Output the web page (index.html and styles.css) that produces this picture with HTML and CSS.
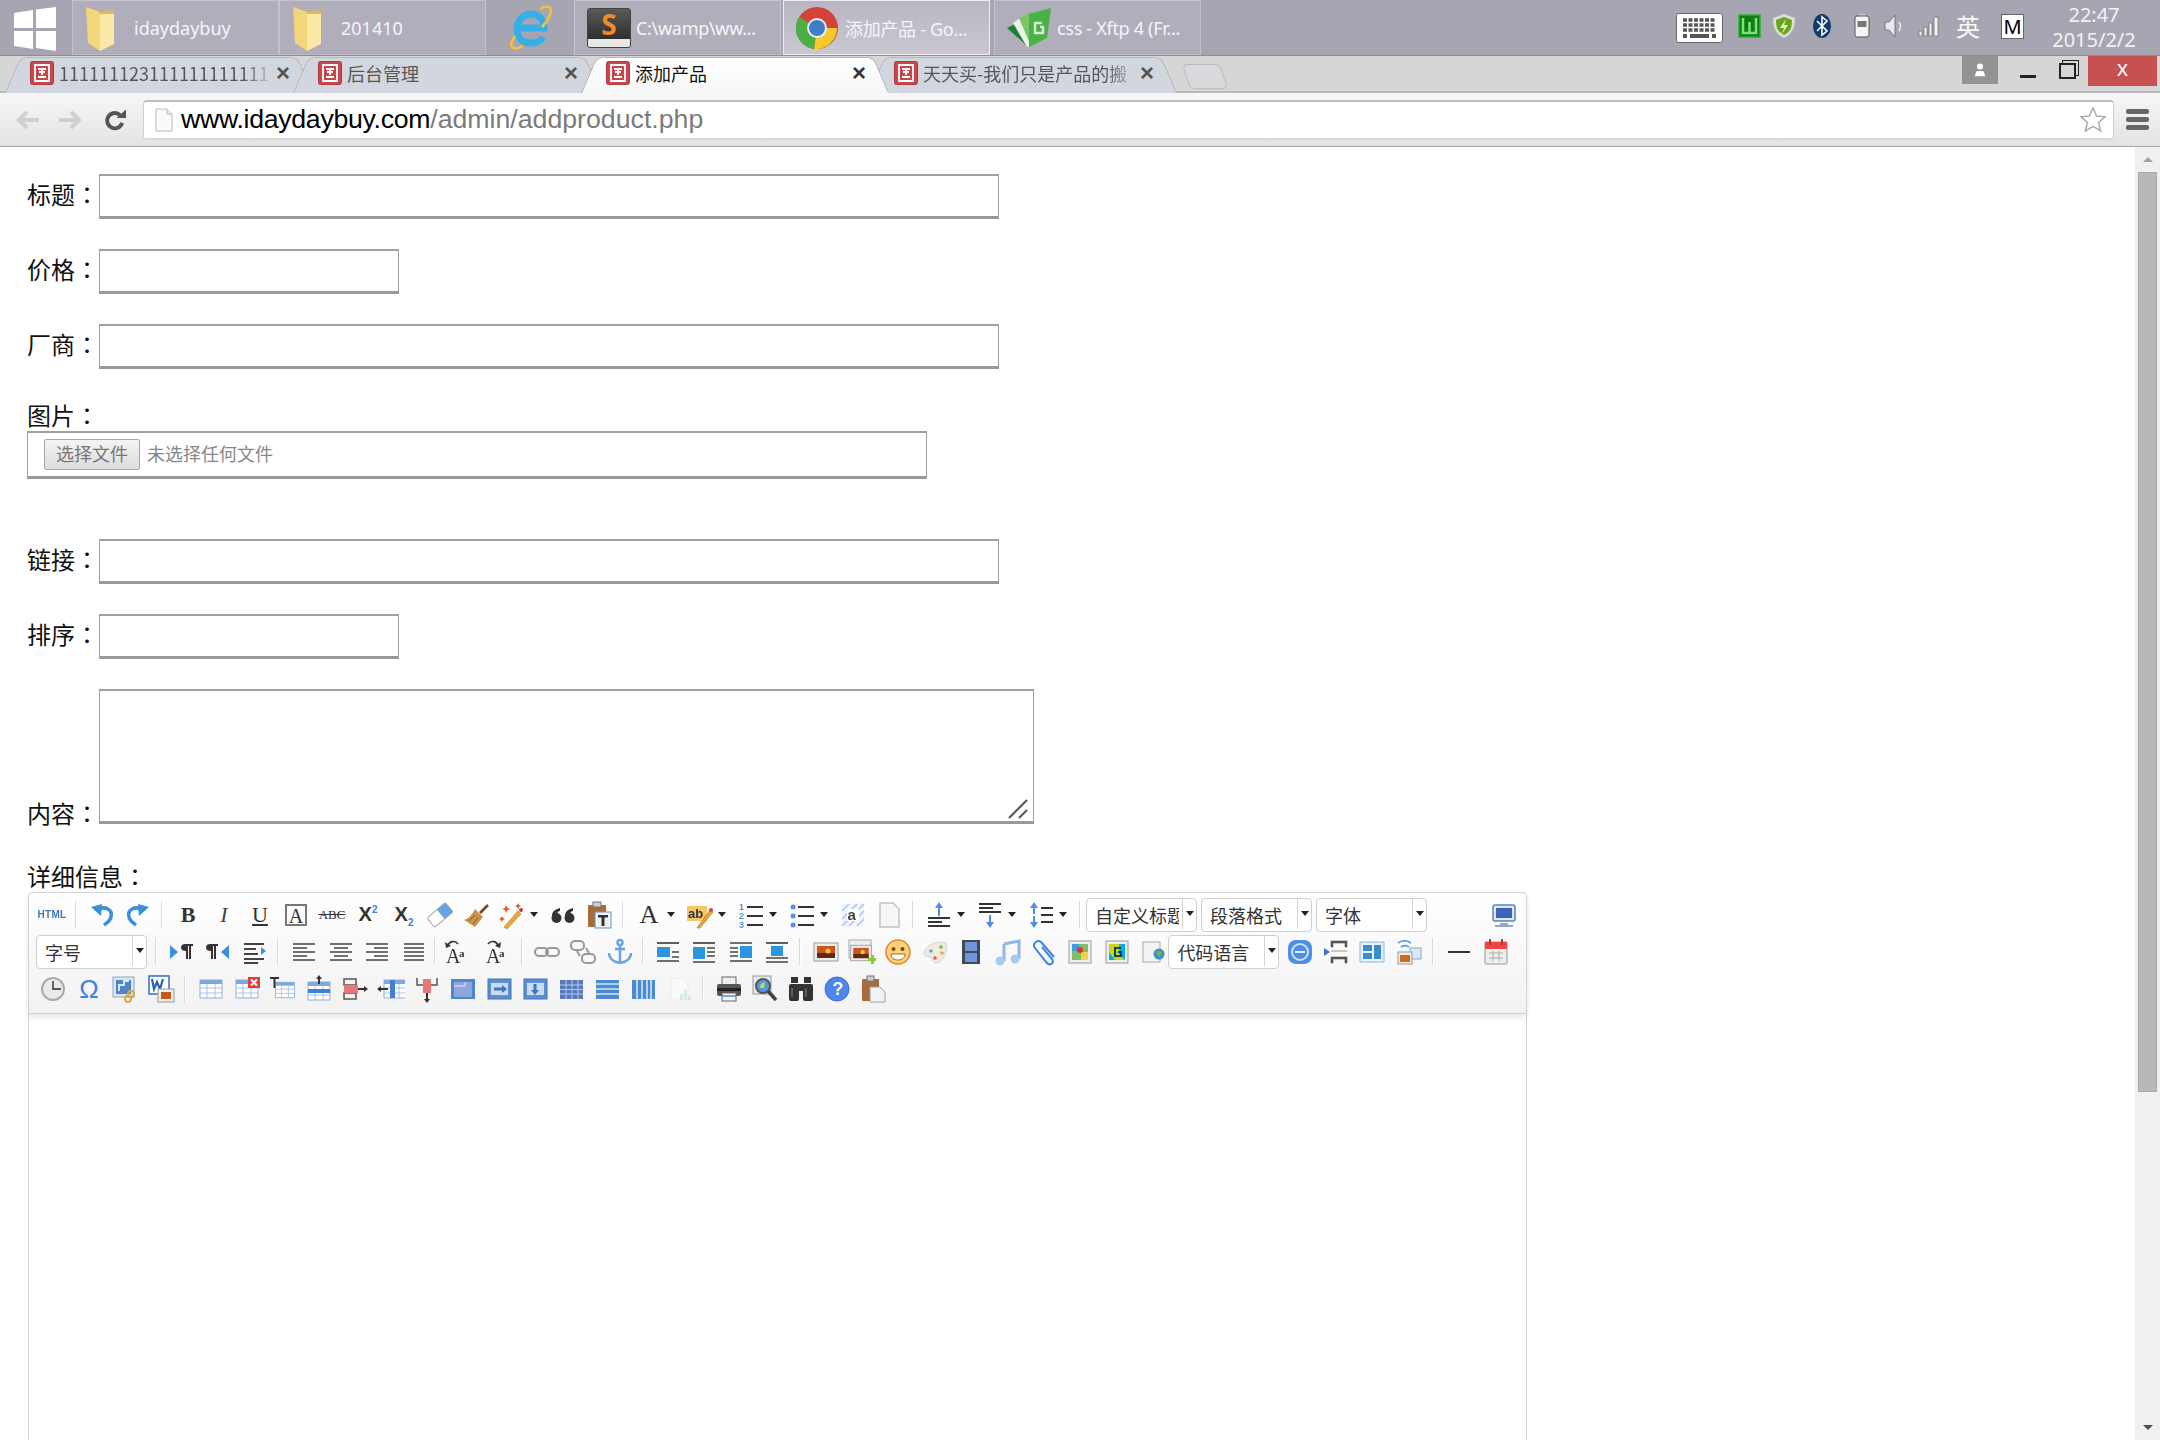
FILE: index.html
```html
<!DOCTYPE html>
<html lang="zh-CN">
<head>
<meta charset="UTF-8" />
<title>添加产品</title>
<link rel="stylesheet" href="styles.css">
</head>
<body>
<svg class="defs" xmlns="http://www.w3.org/2000/svg">
    <symbol id="fav" viewBox="0 0 24 24">
        <rect x="0.5" y="0.5" width="23" height="23" rx="2" fill="#c8474c" stroke="#b03a3e"/>
        <path d="M5 4h14v16H5z M8 8h8 M12 8v6 M9 11h6 M8 16h8" fill="none" stroke="#fff" stroke-width="1.8"/>
    </symbol>
    <symbol id="tbl" viewBox="0 0 28 28">
        <rect x="3" y="5" width="22" height="18" fill="#fff" stroke="#8fb0d8"/>
        <rect x="3" y="5" width="22" height="4" fill="#7fa8dc"/>
        <path d="M3 13h22M3 18h22M10 9v14M18 9v14" stroke="#a9c2e2"/>
    </symbol>
    <symbol id="tbld" viewBox="0 0 28 28">
        <rect x="3" y="4" width="23" height="20" fill="#5d8fd0" stroke="#3f74b8"/>
        <rect x="6" y="8" width="17" height="12" fill="#c9dcf3"/>
    </symbol>
    <symbol id="lines" viewBox="0 0 28 28">
        <path d="M4 6h20M4 10h20M4 14h20M4 18h20M4 22h20" stroke="#444" stroke-width="1.6"/>
    </symbol>
    <symbol id="sunset" viewBox="0 0 28 28">
        <rect x="2" y="5" width="24" height="18" fill="#eee" stroke="#999"/>
        <rect x="5" y="8" width="18" height="12" fill="#c9581c"/>
        <rect x="5" y="15" width="18" height="5" fill="#5c2a10"/>
        <circle cx="16" cy="13" r="2.5" fill="#f6c23e"/>
    </symbol>
    <symbol id="chain" viewBox="0 0 28 28">
        <rect x="2" y="10" width="13" height="8" rx="4" fill="none" stroke="#999" stroke-width="2"/>
        <rect x="13" y="10" width="13" height="8" rx="4" fill="none" stroke="#999" stroke-width="2"/>
    </symbol>
</svg>

<div class="screen">
    <div class="taskbar">
        <svg class="start" viewBox="0 0 42 44"><path d="M0 6l19-3v18H0z M22 2.500L42 0v21H22z M0 24h19v18L0 39z M22 24h20v20l-20-3z" fill="#fff"/></svg>
        <div class="task">
            <svg class="task-ico folder" viewBox="0 0 31 46"><path d="M1 2l14 5v39L3 38z" fill="#f3d67a"/><path d="M15 7h14v32l-14 7z" fill="#f9e8a6"/><path d="M15 7l14-2v4H15z" fill="#e2b94e"/></svg>
            <span>idaydaybuy</span>
        </div>
        <div class="task">
            <svg class="task-ico folder" viewBox="0 0 31 46"><path d="M1 2l14 5v39L3 38z" fill="#f3d67a"/><path d="M15 7h14v32l-14 7z" fill="#f9e8a6"/><path d="M15 7l14-2v4H15z" fill="#e2b94e"/></svg>
            <span>201410</span>
        </div>
        <svg class="ie" viewBox="0 0 46 46">
            <path d="M13 24h24c0-9-6-14-13-14S10 16 10 25s6 14 14 14c6 0 10-2 12-6" fill="none" stroke="#36afe8" stroke-width="7"/>
            <path d="M8 32C0 44 6 47 16 42M33 5c8-5 13-2 10 6-2 5-5 9-8 12" fill="none" stroke="#f2c430" stroke-width="2.500"/>
        </svg>
        <div class="task">
            <div class="sublime"><span>S</span></div>
            <span class="task-label tight">C:\wamp\ww...</span>
        </div>
        <div class="task active">
            <svg class="task-ico chrome" viewBox="0 0 42 42">
                <circle cx="21" cy="21" r="21" fill="#d2433a"/>
                <path d="M21 21L3 10A21 21 0 0 0 18 42z" fill="#4caf43"/>
                <path d="M21 21h20A21 21 0 0 1 18 42z" fill="#f5c92d"/>
                <circle cx="21" cy="21" r="10" fill="#eee"/>
                <circle cx="21" cy="21" r="8" fill="#3f7fc8"/>
            </svg>
            <span class="task-label tight">添加产品 - Go...</span>
        </div>
        <div class="task last">
            <svg class="task-ico xftp" viewBox="0 0 45 40">
                <path d="M0 20l12-6 8 24z" fill="#1f7f35"/>
                <path d="M6 15l10-7 8 30-4 1z" fill="#e9f2e6"/>
                <path d="M12 10L26 3l-2 35z" fill="#7cc36a"/>
                <path d="M22 6L44 0l-4 30-18 9z" fill="#46b247"/>
                <path d="M35 15h-7v10h8v-6h-3" fill="none" stroke="#d6ecd0" stroke-width="2.500"/>
            </svg>
            <span class="task-label tight">css - Xftp 4 (Fr...</span>
        </div>
        <div class="tray">
            <svg class="tray-kbd" viewBox="0 0 47 30">
                <rect x="0.500" y="0.500" width="46" height="29" rx="2" fill="#fff" stroke="#666"/>
                <path d="M7 7h33M7 12h33M7 17h33" stroke="#555" stroke-width="3.500" stroke-dasharray="4 1.500"/>
                <path d="M7 23h4M14 23h19M36 23h4" stroke="#555" stroke-width="4"/>
            </svg>
            <svg class="tray-ico wg" viewBox="0 0 23 24">
                <rect x="1" y="1" width="21" height="22" fill="#0f7d15" stroke="#21b52a" stroke-width="1.500"/>
                <path d="M5 4v15h13V4M11.500 8v11" fill="none" stroke="#7fe07f" stroke-width="2.500"/>
            </svg>
            <svg class="tray-ico shield" viewBox="0 0 24 24"><path d="M12 0l11 4c0 10-3 16-11 20C4 20 1 14 1 4z" fill="#d9dfd2"/><path d="M12 3l8 3c0 8-2 12-8 15C6 18 4 14 4 6z" fill="#6aa51e"/><path d="M14 5l-6 9h4l-2 6 6-9h-4z" fill="#eef6c8"/></svg>
            <svg class="tray-ico bt" viewBox="0 0 18 24"><ellipse cx="9" cy="12" rx="9" ry="12" fill="#0f3a6e"/><path d="M4 7l10 10-5 4V3l5 4L4 17" fill="none" stroke="#fff" stroke-width="1.600"/></svg>
            <svg class="tray-ico batt" viewBox="0 0 16 24"><rect x="5" y="0" width="6" height="3" fill="#ccc"/><rect x="1" y="2" width="14" height="21" rx="2" fill="#f4f4f4" stroke="#555"/><rect x="3.500" y="7" width="9" height="6" fill="#777"/></svg>
            <svg class="tray-ico vol" viewBox="0 0 20 24"><path d="M1 8h4l6-7v22l-6-7H1z" fill="#e8e8ee" stroke="#777"/><path d="M15 8c2 3 2 6 0 9" fill="none" stroke="#eee" stroke-width="1.500"/></svg>
            <svg class="tray-ico sig" viewBox="0 0 22 24"><path d="M1 17h3v5H1zM6 13h3v9H6zM11 9h3v13h-3zM16 3h4v19h-4z" fill="#f1f1f1" stroke="#666" stroke-width="0.700"/></svg>
            <span class="ime">英</span>
            <span class="tray-m">M</span>
            <div class="clock"><span>22:47</span><span>2015/2/2</span></div>
        </div>
    </div>

    <div class="tabstrip">
        <div class="tab">
            <svg class="fav"><use href="#fav"/></svg>
            <span class="tab-title fade">111111123111111111111</span>
            <span class="tab-close">×</span>
        </div>
        <div class="tab">
            <svg class="fav"><use href="#fav"/></svg>
            <span class="tab-title">后台管理</span>
            <span class="tab-close">×</span>
        </div>
        <div class="tab current">
            <svg class="fav"><use href="#fav"/></svg>
            <span class="tab-title">添加产品</span>
            <span class="tab-close">×</span>
        </div>
        <div class="tab">
            <svg class="fav"><use href="#fav"/></svg>
            <span class="tab-title fade">天天买-我们只是产品的搬</span>
            <span class="tab-close">×</span>
        </div>
        <div class="newtab"></div>
        <div class="winctl">
            <div class="avatar"><svg viewBox="0 0 16 16"><circle cx="8" cy="4" r="3.500" fill="#fff"/><path d="M2 15l2-6h8l2 6z" fill="#fff"/></svg></div>
            <div class="win-min"></div>
            <div class="win-max"></div>
            <div class="win-close">x</div>
        </div>
    </div>

    <div class="chrome-bar">
        <svg class="nav back" viewBox="0 0 24 20"><path d="M11 2l-8 8 8 8M3 10h20" fill="none" stroke="#d0d0d0" stroke-width="4"/></svg>
        <svg class="nav fwd" viewBox="0 0 24 20"><path d="M13 2l8 8-8 8M21 10H1" fill="none" stroke="#d0d0d0" stroke-width="4"/></svg>
        <svg class="nav reload" viewBox="0 0 22 24"><path d="M18 15a8 8 0 1 1-2-8" fill="none" stroke="#555" stroke-width="4"/><path d="M12 10h10V1z" fill="#555"/></svg>
        <div class="omnibox">
            <svg class="page-ico" viewBox="0 0 18 24"><path d="M1 1h11l5 5v17H1z" fill="#fafafa" stroke="#bbb"/><path d="M12 1v5h5" fill="#eee" stroke="#bbb"/></svg>
            <span class="url"><span class="url-host">www.idaydaybuy.com</span><span class="url-path">/admin/addproduct.php</span></span>
            <svg class="star" viewBox="0 0 28 28"><path d="M14 2l3.600 8 8.400.800-6.400 5.600 2 8.600L14 20.400 6.400 25l2-8.600L2 10.800l8.400-.800z" fill="#fff" stroke="#aaa" stroke-width="1.500"/></svg>
        </div>
        <div class="menu"><i></i><i></i><i></i></div>
    </div>

    <div class="viewport">
        <main class="page">
            <form class="product-form">
                <div class="row"><label class="lbl">标题<span class="colon" lang="zh-TW">：</span></label><input class="txt long" type="text" /></div>
                <div class="row"><label class="lbl">价格<span class="colon" lang="zh-TW">：</span></label><input class="txt short" type="text" /></div>
                <div class="row"><label class="lbl">厂商<span class="colon" lang="zh-TW">：</span></label><input class="txt long" type="text" /></div>

                <label class="lbl block">图片<span class="colon" lang="zh-TW">：</span></label>
                <div class="filebox">
                    <span class="file-btn">选择文件</span>
                    <span class="file-name">未选择任何文件</span>
                </div>

                <div class="row"><label class="lbl">链接<span class="colon" lang="zh-TW">：</span></label><input class="txt long" type="text" /></div>
                <div class="row"><label class="lbl">排序<span class="colon" lang="zh-TW">：</span></label><input class="txt short" type="text" /></div>
                <div class="row bottom">
                    <label class="lbl">内容<span class="colon" lang="zh-TW">：</span></label>
                    <div class="area-wrap">
                        <textarea class="area"></textarea>
                        <svg class="grip" viewBox="0 0 22 22"><path d="M20 2L2 20M20 12l-8 8" stroke="#555" stroke-width="2"/></svg>
                    </div>
                </div>

                <label class="lbl block detail">详细信息<span class="colon" lang="zh-TW">：</span></label>
                <div class="editor">
                    <div class="toolbar">
                        <!-- row 1 -->
                        <div class="tb-row">
                            <span class="ic"><span class="html-ico">HTML</span></span>
                            <i class="sep"></i>
                            <span class="ic"><svg viewBox="0 0 28 28"><path d="M10 9c7-5 15 0 13 7-1 4-4 6-7 8" fill="none" stroke="#3a8ee0" stroke-width="3.500"/><path d="M3 6l11-3-1 12z" fill="#3a8ee0"/></svg></span>
                            <span class="ic"><svg viewBox="0 0 28 28"><path d="M18 9c-7-5-15 0-13 7 1 4 4 6 7 8" fill="none" stroke="#3a8ee0" stroke-width="3.500"/><path d="M25 6l-11-3 1 12z" fill="#3a8ee0"/></svg></span>
                            <i class="sep"></i>
                            <span class="ic"><b class="gl">B</b></span>
                            <span class="ic"><em class="gl it">I</em></span>
                            <span class="ic"><span class="gl ul">U</span></span>
                            <span class="ic"><span class="gl boxed">A</span></span>
                            <span class="ic"><span class="gl strike">ABC</span></span>
                            <span class="ic"><span class="gl sc">X<sup>2</sup></span></span>
                            <span class="ic"><span class="gl sc">X<sub>2</sub></span></span>
                            <span class="ic"><svg viewBox="0 0 28 28"><g transform="rotate(-40 14 14)"><rect x="2" y="8" width="24" height="12" rx="2" fill="#fff" stroke="#a5a5a5"/><rect x="15" y="8" width="11" height="12" rx="1" fill="#6aa2e6"/></g></svg></span>
                            <span class="ic"><svg viewBox="0 0 28 28"><path d="M17 11l8-8 2 2-8 8z" fill="#7a4f1c"/><path d="M13 8l8 8-8 10L2 19c4-1 8-5 11-11z" fill="#c9934a"/><path d="M7 20l6-6M11 23l5-6" stroke="#8a5f24"/></svg></span>
                            <span class="ic dd"><svg viewBox="0 0 28 28"><path d="M6 26L20 10l3 3L9 28z" fill="#e9a93b" stroke="#b97a1e" stroke-width=".6"/><path d="M8 4l1.500 3 3 1-3 1L8 12 7 9 4 8l3-1zM20 2l1 2 2 1-2 1-1 2-1-2-2-1 2-1zM4 15l1 2 2 1-2 1-1 2-1-2-2-1 2-1z" fill="#e8552a"/><circle cx="23" cy="9" r="2" fill="#d33"/></svg><i class="caret"></i></span>
                            <span class="ic"><svg viewBox="0 0 28 28"><g fill="#333"><circle cx="7.500" cy="17" r="5"/><path d="M3 15C3 10 7 8 11 7v3c-2 0-3 2-3 4z"/><circle cx="20.500" cy="17" r="5"/><path d="M16 15c0-5 4-7 8-8v3c-2 0-3 2-3 4z"/></g></svg></span>
                            <span class="ic"><svg viewBox="0 0 28 28"><rect x="3" y="4" width="18" height="22" rx="1" fill="#a86b3a"/><rect x="8" y="1" width="8" height="5" fill="#ccc" stroke="#777"/><rect x="10" y="11" width="16" height="16" fill="#eef3f8" stroke="#6f90b5"/><path d="M13 14h10v2.500h-3.500V25h-3v-8.500H13z" fill="#333"/></svg></span>
                            <i class="sep"></i>
                            <span class="ic dd"><span class="gl big">A</span><i class="caret"></i></span>
                            <span class="ic dd"><svg viewBox="0 0 28 28"><rect x="1" y="5" width="20" height="15" fill="#f5c769"/><text x="2" y="17" class="svg-ab">ab</text><path d="M11 27L24 9l3 2-13 16z" fill="#e7a63b" stroke="#a3701e" stroke-width=".6"/><circle cx="25" cy="9" r="2" fill="#d43"/></svg><i class="caret"></i></span>
                            <span class="ic dd"><svg viewBox="0 0 28 28"><text x="2" y="9" class="svg-num">1</text><text x="2" y="18" class="svg-num">2</text><text x="2" y="27" class="svg-num">3</text><path d="M10 6h16M10 15h16M10 24h16" stroke="#333" stroke-width="2"/></svg><i class="caret"></i></span>
                            <span class="ic dd"><svg viewBox="0 0 28 28"><g fill="#5b8fe8"><circle cx="5" cy="6" r="2.500"/><circle cx="5" cy="15" r="2.500"/><circle cx="5" cy="24" r="2.500"/></g><path d="M10 6h16M10 15h16M10 24h16" stroke="#333" stroke-width="2"/></svg><i class="caret"></i></span>
                            <span class="ic"><svg viewBox="0 0 28 28"><rect x="3" y="3" width="22" height="22" fill="#f0f5fd"/><path d="M3 10l7-7M3 18L18 3M3 25L25 3M10 25L25 10M18 25l7-7" stroke="#a9c6f0" stroke-width="1.500"/><rect x="8" y="8" width="12" height="12" fill="#fff"/><text x="8.500" y="19" class="svg-a">a</text></svg></span>
                            <span class="ic"><svg viewBox="0 0 28 28"><path d="M5 2h13l6 6v18H5z" fill="#f6f6f6" stroke="#c4c4c4" stroke-width="1.500"/></svg></span>
                            <i class="sep"></i>
                            <span class="ic dd"><svg viewBox="0 0 28 28"><path d="M14 1l-4 6h3v8h2V7h3z" fill="#4f8fe0"/><path d="M3 17h22M3 21h14M3 25h22" stroke="#333" stroke-width="2"/></svg><i class="caret"></i></span>
                            <span class="ic dd"><svg viewBox="0 0 28 28"><path d="M3 3h22M3 7h14M3 11h22" stroke="#333" stroke-width="2"/><path d="M14 27l-4-6h3v-7h2v7h3z" fill="#4f8fe0"/></svg><i class="caret"></i></span>
                            <span class="ic dd"><svg viewBox="0 0 28 28"><path d="M7 1L3 7h3v6h2V7h3zM7 27l-4-6h3v-6h2v6h3z" fill="#4f8fe0"/><path d="M14 7h12M14 14h12M14 21h12" stroke="#333" stroke-width="2"/></svg><i class="caret"></i></span>
                            <i class="sep last-sep"></i>
                            <div class="sel"><span class="sel-text">自定义标题</span><span class="sel-btn"><i class="caret"></i></span></div>
                            <div class="sel"><span class="sel-text">段落格式</span><span class="sel-btn"><i class="caret"></i></span></div>
                            <div class="sel"><span class="sel-text">字体</span><span class="sel-btn"><i class="caret"></i></span></div>
                            <span class="ic monitor"><svg viewBox="0 0 28 28"><rect x="3" y="4" width="22" height="16" rx="2" fill="#dce8f6" stroke="#5e83b0" stroke-width="1.500"/><rect x="6" y="7" width="16" height="10" fill="#3b62b8"/><path d="M10 23h8M5 25h18" stroke="#6f8fb8" stroke-width="1.500"/></svg></span>
                        </div>
                        <!-- row 2 -->
                        <div class="tb-row second">
                            <div class="sel first-sel"><span class="sel-text">字号</span><span class="sel-btn"><i class="caret"></i></span></div>
                            <i class="sep after-sel"></i>
                            <span class="ic"><svg viewBox="0 0 28 28"><path d="M3 7l8 7-8 7z" fill="#3d8fe0"/><path d="M18 6h8v2h-2v13h-2V8h-1v13h-2v-8c-3 0-5-1-5-3.500S16 6 18 6z" fill="#333"/></svg></span>
                            <span class="ic"><svg viewBox="0 0 28 28"><path d="M25 7l-8 7 8 7z" fill="#3d8fe0"/><path d="M6 6h8v2h-2v13h-2V8H9v13H7v-8c-3 0-5-1-5-3.500S4 6 6 6z" fill="#333"/></svg></span>
                            <span class="ic"><svg viewBox="0 0 28 28"><path d="M4 6h20M4 11h12M4 16h14M4 21h20M4 25h14" stroke="#444" stroke-width="1.800"/><path d="M26 13l-5-4v8z" fill="#3d8fe0"/></svg></span>
                            <i class="sep"></i>
                            <span class="ic"><svg viewBox="0 0 28 28"><path d="M3 6h22M3 10h14M3 14h22M3 18h14M3 22h22" stroke="#444" stroke-width="1.700"/></svg></span>
                            <span class="ic"><svg viewBox="0 0 28 28"><path d="M3 6h22M7 10h14M3 14h22M7 18h14M3 22h22" stroke="#444" stroke-width="1.700"/></svg></span>
                            <span class="ic"><svg viewBox="0 0 28 28"><path d="M3 6h22M11 10h14M3 14h22M11 18h14M3 22h22" stroke="#444" stroke-width="1.700"/></svg></span>
                            <span class="ic"><svg viewBox="0 0 28 28"><use href="#lines"/></svg></span>
                            <i class="sep tight"></i>
                            <span class="ic w40"><svg viewBox="0 0 28 28"><path d="M5 8c1-5 7-6 10-2" fill="none" stroke="#333" stroke-width="1.700"/><path d="M2 4l1 6 5-2z" fill="#333"/><text x="3" y="25" class="svg-big">A</text><text x="16" y="19" class="svg-small">a</text></svg></span>
                            <span class="ic w40"><svg viewBox="0 0 28 28"><path d="M5 6c3-4 9-3 10 2" fill="none" stroke="#333" stroke-width="1.700"/><path d="M18 4l-1 6-5-2z" fill="#333"/><text x="3" y="25" class="svg-big">A</text><text x="16" y="19" class="svg-small">a</text></svg></span>
                            <i class="sep mid"></i>
                            <span class="ic"><svg viewBox="0 0 28 28"><use href="#chain"/></svg></span>
                            <span class="ic"><svg viewBox="0 0 28 28"><g fill="none" stroke="#999" stroke-width="2"><rect x="2" y="3" width="13" height="9" rx="4"/><rect x="13" y="16" width="13" height="9" rx="4"/><path d="M8 13l3 5M20 15l-3-5"/></g></svg></span>
                            <span class="ic"><svg viewBox="0 0 28 28"><g fill="none" stroke="#6aa3e0" stroke-width="2.500"><circle cx="14" cy="4.500" r="2.500"/><path d="M14 7v18M9 11h10M3 15c0 6 5 9 11 10 6-1 11-4 11-10"/></g></svg></span>
                            <i class="sep mid"></i>
                            <span class="ic"><svg viewBox="0 0 28 28"><path d="M3 5h22" stroke="#444" stroke-width="1.700"/><rect x="3" y="9" width="13" height="10" fill="#2b95e0"/><path d="M18 14h7M18 19h7M3 23h22" stroke="#444" stroke-width="1.700"/></svg></span>
                            <span class="ic"><svg viewBox="0 0 28 28"><path d="M3 5h22" stroke="#444" stroke-width="1.700"/><rect x="3" y="9" width="12" height="12" fill="#2b95e0"/><path d="M17 10h8M17 14h8M17 18h8M3 24h22" stroke="#444" stroke-width="1.700"/></svg></span>
                            <span class="ic"><svg viewBox="0 0 28 28"><path d="M3 5h22M3 10h8M3 14h8M3 18h8M3 23h22" stroke="#444" stroke-width="1.700"/><rect x="13" y="8" width="12" height="12" fill="#2b95e0"/></svg></span>
                            <span class="ic"><svg viewBox="0 0 28 28"><path d="M3 5h22" stroke="#444" stroke-width="1.700"/><rect x="8" y="8" width="12" height="10" fill="#2b95e0"/><path d="M3 20h22M3 24h22" stroke="#444" stroke-width="1.700"/></svg></span>
                            <i class="sep mid"></i>
                            <span class="ic"><svg viewBox="0 0 28 28"><use href="#sunset"/></svg></span>
                            <span class="ic"><svg viewBox="0 0 28 28"><rect x="1" y="2" width="22" height="18" fill="#eee" stroke="#aaa"/><use href="#sunset" x="1" y="3" width="24" height="24"/><path d="M23 17h3v3h2v3h-2v3h-3v-3h-3v-3h3z" fill="#8ec63f"/></svg></span>
                            <span class="ic"><svg viewBox="0 0 28 28"><circle cx="14" cy="14" r="12" fill="#fbd37a" stroke="#e5862a" stroke-width="1.500"/><circle cx="9.500" cy="11" r="2" fill="#7a4a12"/><circle cx="18.500" cy="11" r="2" fill="#7a4a12"/><path d="M7 16h14c0 4-3 6-7 6s-7-2-7-6z" fill="#fff" stroke="#a5621c"/></svg></span>
                            <span class="ic"><svg viewBox="0 0 28 28"><path d="M3 15C5 6 18 2 25 5c2 6-2 20-10 20-4 0-3-5-6-6-2-1-6 0-6-4z" fill="#eeeadf" stroke="#d8d3c4"/><g><circle cx="20" cy="9" r="1.800" fill="#7ab648"/><circle cx="21" cy="15" r="1.800" fill="#e8a53b"/><circle cx="14" cy="20" r="1.800" fill="#d9634a"/><circle cx="10" cy="13" r="1.800" fill="#6a9be0"/></g></svg></span>
                            <span class="ic"><svg viewBox="0 0 28 28"><rect x="5" y="2" width="18" height="24" fill="#3f4a57"/><rect x="8" y="4" width="12" height="9" fill="#6f96dc"/><rect x="8" y="15" width="12" height="9" fill="#6f96dc"/></svg></span>
                            <span class="ic"><svg viewBox="0 0 28 28"><path d="M10 6l15-3v18" fill="none" stroke="#8db8ea" stroke-width="3"/><path d="M10 6v17" stroke="#8db8ea" stroke-width="3"/><circle cx="6" cy="23" r="4.500" fill="#a9cbf0"/><circle cx="21" cy="21" r="4.500" fill="#a9cbf0"/></svg></span>
                            <span class="ic"><svg viewBox="0 0 28 28"><path d="M12 9l10 12c3 4-2 7-5 4L5 10C2 6 7 1 11 4l13 15" fill="none" stroke="#3f80e0" stroke-width="2"/></svg></span>
                            <span class="ic"><svg viewBox="0 0 28 28"><rect x="3" y="3" width="22" height="22" fill="#eee" stroke="#9a9a9a"/><rect x="6" y="6" width="16" height="16" fill="#7cc06a"/><rect x="6" y="6" width="7" height="7" fill="#3f9ade"/><rect x="15" y="14" width="7" height="8" fill="#f0d34a"/><circle cx="14" cy="12" r="3" fill="#d33"/></svg></span>
                            <span class="ic"><svg viewBox="0 0 28 28"><rect x="3" y="3" width="22" height="22" fill="#eee" stroke="#9a9a9a"/><rect x="6" y="6" width="16" height="16" fill="#12a8e0"/><path d="M6 6h10v10l6 6H12L6 14z" fill="#c9d41f"/><path d="M18 10h-6v8h6v-4h-3" fill="none" stroke="#145" stroke-width="2"/></svg></span>
                            <span class="ic"><svg viewBox="0 0 28 28"><rect x="4" y="4" width="17" height="20" fill="#f3f3f3" stroke="#aaa"/><circle cx="20" cy="16" r="5.500" fill="#3f8fd0"/><path d="M17 14c2-2 5-1 6 1l-3 4z" fill="#7ab648"/></svg></span>
                            <div class="sel code-sel"><span class="sel-text">代码语言</span><span class="sel-btn"><i class="caret"></i></span></div>
                            <span class="ic after-code"><svg viewBox="0 0 28 28"><rect x="2" y="2" width="24" height="24" rx="8" fill="#4a8ee8"/><circle cx="14" cy="14" r="8" fill="none" stroke="#cfe2fa" stroke-width="2"/><path d="M9 14h10" stroke="#e4effc" stroke-width="2"/></svg></span>
                            <span class="ic"><svg viewBox="0 0 28 28"><path d="M9 3h16v6h-2V5H11v4H9zM9 19h16v6h-2v-4H11v4H9zM9 13h16" fill="#555" stroke="#555" stroke-width=".6"/><path d="M8 14l-6-4v8z" fill="#3a74d0"/></svg></span>
                            <span class="ic"><svg viewBox="0 0 28 28"><rect x="2" y="4" width="24" height="20" fill="#e8f1fb" stroke="#8fb3dc"/><rect x="5" y="7" width="9" height="6" fill="#3b8ccf"/><rect x="5" y="15" width="9" height="6" fill="#3b8ccf"/><rect x="16" y="7" width="7" height="14" fill="#3b8ccf"/></svg></span>
                            <span class="ic"><svg viewBox="0 0 28 28"><path d="M3 5c4-3 9-3 13 0M6 9c3-2 5-2 8 0" fill="none" stroke="#5f9be0" stroke-width="1.600"/><rect x="15" y="10" width="11" height="11" fill="#dbe8f7" stroke="#88a8cc"/><rect x="3" y="14" width="14" height="12" fill="#eee" stroke="#999"/><rect x="5" y="17" width="10" height="7" fill="#cf6a1e"/></svg></span>
                            <i class="sep"></i>
                            <span class="ic"><svg viewBox="0 0 28 28"><path d="M3 14h22" stroke="#333" stroke-width="2"/></svg></span>
                            <span class="ic"><svg viewBox="0 0 28 28"><rect x="3" y="4" width="22" height="22" rx="1" fill="#eee" stroke="#999"/><rect x="3" y="4" width="22" height="7" fill="#ee4343"/><path d="M8 1v6M20 1v6" stroke="#b33" stroke-width="2"/><path d="M7 15h14M7 20h14M11 13v10M17 13v10" stroke="#aaa"/></svg></span>
                        </div>
                        <!-- row 3 -->
                        <div class="tb-row third">
                            <span class="ic"><svg viewBox="0 0 28 28"><circle cx="14" cy="14" r="11" fill="#e9e9e9" stroke="#aaa" stroke-width="2"/><path d="M14 6v8h8" fill="none" stroke="#555" stroke-width="1.800"/></svg></span>
                            <span class="ic"><span class="gl omega">Ω</span></span>
                            <span class="ic"><svg viewBox="0 0 28 28"><rect x="2" y="2" width="21" height="20" fill="#dde6f2" stroke="#8ea6c6"/><rect x="5" y="5" width="15" height="14" fill="#4f85c8"/><path d="M8 16v-6h5V6h5" fill="none" stroke="#d8e6f7" stroke-width="2"/><circle cx="20" cy="19" r="3" fill="none" stroke="#d9a93f" stroke-width="2"/><circle cx="17" cy="24" r="3" fill="none" stroke="#d9a93f" stroke-width="2"/></svg></span>
                            <span class="ic"><svg viewBox="0 0 28 28"><rect x="2" y="1" width="20" height="18" fill="#fff" stroke="#2f6fc0" stroke-width="1.500"/><path d="M5 4l2 10 3-7 3 7 3-10" fill="none" stroke="#2b63b0" stroke-width="2.200"/><rect x="11" y="14" width="16" height="13" fill="#eee" stroke="#999"/><rect x="14" y="17" width="10" height="7" fill="#c9581c"/></svg></span>
                            <i class="sep"></i>
                            <span class="ic"><svg viewBox="0 0 28 28"><use href="#tbl"/></svg></span>
                            <span class="ic"><svg viewBox="0 0 28 28"><use href="#tbl"/><rect x="15" y="2" width="12" height="11" fill="#e43a3a"/><path d="M18 4.500l6 6M24 4.500l-6 6" stroke="#fff" stroke-width="2"/></svg></span>
                            <span class="ic"><svg viewBox="0 0 28 28"><use href="#tbl" x="4" y="3" width="24" height="24"/><path d="M1 2h9v2H6.500v9h-2V4H1z" fill="#333"/></svg></span>
                            <span class="ic"><svg viewBox="0 0 28 28"><use href="#tbl" y="2"/><rect x="3" y="14" width="22" height="4" fill="#3f7fd6"/><path d="M14 0l-3 4h2v5h2V4h2z" fill="#333"/></svg></span>
                            <span class="ic"><svg viewBox="0 0 28 28"><path d="M3 4h12v6H3zM3 18h12v6H3z" fill="none" stroke="#555" stroke-width="1.500"/><rect x="3" y="10" width="14" height="8" fill="#e87878"/><path d="M17 14h9" stroke="#333" stroke-width="2"/><path d="M27 14l-4-3v6z" fill="#333"/></svg></span>
                            <span class="ic"><svg viewBox="0 0 28 28"><use href="#tbl" x="4"/><rect x="13" y="5" width="5" height="18" fill="#3f7fd6"/><path d="M1 14h10" stroke="#333" stroke-width="2"/><path d="M0 14l4-3v6z" fill="#333"/></svg></span>
                            <span class="ic"><svg viewBox="0 0 28 28"><path d="M4 3v7h20V3" fill="none" stroke="#555" stroke-width="1.500"/><rect x="10" y="4" width="8" height="14" fill="#e87878"/><path d="M14 18v8" stroke="#333" stroke-width="2"/><path d="M14 28l-3-4h6z" fill="#333"/></svg></span>
                            <span class="ic"><svg viewBox="0 0 28 28"><rect x="2" y="4" width="24" height="20" fill="#4f86cc"/><rect x="5" y="7" width="18" height="15" fill="#8ea6dc"/><path d="M5 11h11V7" fill="none" stroke="#e4ecf7"/></svg></span>
                            <span class="ic"><svg viewBox="0 0 28 28"><use href="#tbld"/><path d="M9 14h9" stroke="#3f74b8" stroke-width="3"/><path d="M22 14l-5-4v8z" fill="#3f74b8"/></svg></span>
                            <span class="ic"><svg viewBox="0 0 28 28"><use href="#tbld"/><path d="M14 9v6" stroke="#3f74b8" stroke-width="3"/><path d="M14 20l-4-5h8z" fill="#3f74b8"/></svg></span>
                            <span class="ic"><svg viewBox="0 0 28 28"><rect x="3" y="5" width="23" height="19" fill="#5878bc"/><path d="M3 10h23M3 14.500h23M3 19h23M9 5v19M15 5v19M21 5v19" stroke="#b7c7ea"/></svg></span>
                            <span class="ic"><svg viewBox="0 0 28 28"><rect x="3" y="5" width="23" height="19" fill="#4a8ccf"/><path d="M3 9h23M3 14h23M3 19h23" stroke="#d4e5f6" stroke-width="1.600"/></svg></span>
                            <span class="ic"><svg viewBox="0 0 28 28"><rect x="3" y="5" width="23" height="19" fill="#4a8ccf"/><path d="M8 5v19M13 5v19M18 5v19M22 5v19" stroke="#d4e5f6" stroke-width="1.600"/></svg></span>
                            <span class="ic"><svg viewBox="0 0 28 28"><path d="M6 3h12l5 5v17H6z" fill="#f9f9f9" stroke="#ececec"/><path d="M15 25v-6h3v6zM19 25V15h3v10zM23 25v-4h3v4z" fill="#d9e7ea"/></svg></span>
                            <i class="sep"></i>
                            <span class="ic"><svg viewBox="0 0 28 28"><rect x="7" y="2" width="14" height="8" fill="#eee" stroke="#666"/><rect x="2" y="9" width="24" height="12" rx="2" fill="#555"/><rect x="2" y="13" width="24" height="3" fill="#222"/><rect x="7" y="18" width="14" height="8" fill="#f4f4f4" stroke="#666"/><path d="M7 21h14" stroke="#4b8ce0" stroke-width="1.500"/></svg></span>
                            <span class="ic"><svg viewBox="0 0 28 28"><rect x="2" y="1" width="18" height="18" fill="#e8e8e8" stroke="#999"/><circle cx="12" cy="11" r="7" fill="#4f9be0" stroke="#555" stroke-width="2"/><path d="M9 13c0-4 2-5 5-6l-1 6z" fill="#c4d84a"/><path d="M17 16l8 9" stroke="#444" stroke-width="3.500"/></svg></span>
                            <span class="ic"><svg viewBox="0 0 28 28"><g fill="#333"><rect x="4" y="2" width="7" height="6"/><rect x="17" y="2" width="7" height="6"/><rect x="2" y="9" width="10" height="17" rx="2"/><rect x="16" y="9" width="10" height="17" rx="2"/><rect x="11" y="9" width="6" height="7"/></g><path d="M5 13v9M19 13v9" stroke="#888"/></svg></span>
                            <span class="ic"><svg viewBox="0 0 28 28"><circle cx="14" cy="14" r="12" fill="#4f86ee" stroke="#3a6fcf"/><text x="9.500" y="20" class="svg-help">?</text></svg></span>
                            <span class="ic"><svg viewBox="0 0 28 28"><rect x="3" y="4" width="17" height="22" rx="1" fill="#a86b3a"/><rect x="8" y="1" width="7" height="5" fill="#ccc" stroke="#777"/><path d="M11 12h10l5 5v10H11z" fill="#f0f2f4" stroke="#9aa2aa"/></svg></span>
                        </div>
                    </div>
                    <div class="edit-body"></div>
                </div>
            </form>
        </main>
        <div class="scrollbar">
            <div class="sb-btn"><i class="arrow-up"></i></div>
            <div class="sb-thumb"></div>
            <div class="sb-track"></div>
            <div class="sb-btn"><i class="arrow-down"></i></div>
        </div>
    </div>
</div>
</body>
</html>
```
FILE: styles.css
```css
/* desktop + browser frame */
* {
    box-sizing: border-box;
}
html, body {
    margin: 0;
    height: 100%;
    overflow: hidden;
}
body {
    font-family: "Liberation Sans", "Noto Sans CJK SC", sans-serif;
    background: #fff;
}
.defs {
    display: none;
}
.screen {
    height: 1440px;
    display: flex;
    flex-direction: column;
}

/* taskbar */
.taskbar {
    height: 56px;
    flex: none;
    display: flex;
    align-items: flex-start;
    background: #a8a5b3;
    border-bottom: 1px solid #8f8c9b;
    color: #fff;
    font-family: "Noto Sans", "Noto Sans CJK SC", sans-serif;
    font-size: 18px;
}
.start {
    width: 42px;
    height: 44px;
    margin: 7px 16px 0 14px;
}
.task {
    width: 207px;
    height: 55px;
    padding-left: 12px;
    display: flex;
    align-items: center;
    background: #b1aebb;
    border: 1px solid #c4c2ce;
    border-bottom-color: #bcbac6;
    white-space: nowrap;
    color: #f5f5f8;
}
.task.active {
    margin-left: 2px;
    background: linear-gradient(#b9b6c2, #c9c7d2);
    border-color: #eeeef2;
}
.task.last {
    margin-left: 4px;
}
.task-ico {
    flex: none;
}
.folder {
    width: 31px;
    height: 46px;
    margin-right: 18px;
}
.ie {
    width: 46px;
    height: 46px;
    margin: 4px 21px 0 21px;
    flex: none;
}
.sublime {
    width: 44px;
    height: 40px;
    flex: none;
    margin-right: 5px;
    border-radius: 3px;
    background: linear-gradient(#5a5a5a, #2f2f2f 78%, #e8e8e8 80%);
    border: 1px solid #444;
    text-align: center;
    line-height: 30px;
    font-size: 28px;
    font-weight: bold;
    color: #f08a26;
}
.chrome {
    width: 42px;
    height: 42px;
    margin-right: 7px;
}
.xftp {
    width: 45px;
    height: 40px;
    margin-right: 5px;
}
.task-label.tight {
    letter-spacing: -0.3px;
}
.tray {
    margin-left: auto;
    padding-right: 16px;
    display: flex;
    align-items: flex-start;
}
.tray-kbd {
    width: 47px;
    height: 30px;
    margin: 13px 15px 0 0;
    flex: none;
}
.tray-ico {
    flex: none;
    height: 24px;
    margin-top: 14px;
}
.wg { width: 23px; margin-right: 11px; }
.shield { width: 24px; margin-right: 17px; }
.bt { width: 18px; margin-right: 23px; }
.batt { width: 16px; margin-right: 14px; }
.vol { width: 20px; margin-right: 14px; }
.sig { width: 22px; margin-right: 16px; }
.ime {
    font-size: 24px;
    line-height: 26px;
    margin: 13px 21px 0 0;
    color: #f8f8f8;
    font-family: "Noto Sans CJK SC", sans-serif;
}
.tray-m {
    width: 23px;
    height: 25px;
    margin-top: 14px;
    background: #fff;
    border: 1px solid #666;
    color: #000;
    text-align: center;
    font-size: 20px;
    line-height: 23px;
}
.clock {
    width: 100px;
    margin-left: 20px;
    display: flex;
    flex-direction: column;
    align-items: center;
    font-size: 20px;
    line-height: 25px;
    margin-top: 2px;
    color: #f2f2f4;
}

/* tabs */
.tabstrip {
    height: 37px;
    flex: none;
    display: flex;
    align-items: flex-end;
    padding-left: 5px;
    background: #d6d6d6;
    box-shadow: inset 0 -2px 0 #bababa;
    position: relative;
}
.tab {
    width: 308px;
    height: 36px;
    margin-right: -20px;
    position: relative;
    display: flex;
    align-items: center;
    padding: 0 0 4px 25px;
    font-family: "Noto Sans CJK SC", sans-serif;
    font-size: 18px;
    color: #555;
}
.tab::before,
.tab::after {
    content: "";
    position: absolute;
    top: 0;
    bottom: 0;
    width: 55%;
    background: #d2d7df;
    border-top: 1px solid #b4b8bf;
}
.tab::before {
    left: 0;
    transform: skewX(-23deg);
    transform-origin: bottom left;
    border-left: 1px solid #a8acb3;
    border-radius: 7px 0 0 0;
}
.tab::after {
    right: 0;
    transform: skewX(23deg);
    transform-origin: bottom right;
    border-right: 1px solid #a8acb3;
    border-radius: 0 7px 0 0;
}
.tab.current {
    z-index: 2;
    color: #111;
}
.tab.current::before,
.tab.current::after {
    background: linear-gradient(#fff, #f6f6f6);
}
.fav {
    width: 24px;
    height: 24px;
    flex: none;
    position: relative;
    z-index: 1;
}
.tab-title {
    width: 216px;
    margin-left: 5px;
    white-space: nowrap;
    position: relative;
    z-index: 1;
}
.tab-title.fade {
    -webkit-mask-image: linear-gradient(to right, #000 85%, transparent);
    mask-image: linear-gradient(to right, #000 85%, transparent);
}
.tab-close {
    position: relative;
    z-index: 1;
    width: 16px;
    font: bold 24px "Liberation Sans", sans-serif;
    text-align: center;
    color: #555;
}
.tab.current .tab-close {
    color: #333;
}
.newtab {
    width: 38px;
    height: 25px;
    margin: 0 0 4px 29px;
    transform: skewX(18deg);
    border: 1px solid #bcbcbc;
    border-radius: 5px;
    background: #d8dadd;
}
.winctl {
    margin-left: auto;
    align-self: flex-start;
    display: flex;
    align-items: flex-start;
    padding-right: 3px;
}
.avatar {
    width: 36px;
    height: 28px;
    background: #949494;
    display: flex;
    align-items: center;
    justify-content: center;
}
.avatar svg {
    width: 14px;
    height: 14px;
}
.win-min {
    width: 16px;
    height: 3px;
    background: #222;
    margin: 19px 23px 0 22px;
}
.win-max {
    width: 17px;
    height: 16px;
    margin: 7px 12px 0 0;
    border: 2px solid #222;
    box-shadow: 3px -3px 0 -1px #d6d6d6, 3px -3px 0 0 #222;
}
.win-close {
    width: 69px;
    height: 30px;
    background: #c75050;
    color: #fff;
    font-size: 22px;
    line-height: 26px;
    text-align: center;
}

/* toolbar with address bar */
.chrome-bar {
    height: 54px;
    flex: none;
    display: flex;
    align-items: center;
    background: linear-gradient(#f7f7f7, #e3e3e3);
    border-bottom: 1px solid #a8a8a8;
}
.nav {
    flex: none;
}
.back {
    width: 24px;
    height: 20px;
    margin-left: 16px;
}
.fwd {
    width: 24px;
    height: 20px;
    margin-left: 18px;
}
.reload {
    width: 21px;
    height: 24px;
    margin-left: 23px;
}
.omnibox {
    width: 1971px;
    height: 40px;
    margin-left: 17px;
    padding-left: 11px;
    display: flex;
    align-items: center;
    background: #fff;
    border: 1px solid #cfcfcf;
    border-top: 2px solid #bdbdbd;
    border-bottom: 2px solid #d8d8d8;
    border-radius: 4px;
}
.page-ico {
    width: 18px;
    height: 24px;
    flex: none;
}
.url {
    margin-left: 8px;
    font-size: 26.7px;
    color: #000;
    white-space: nowrap;
}
.url-host {
    letter-spacing: -0.3px;
}
.url-path {
    color: #7b7b7b;
}
.star {
    width: 28px;
    height: 28px;
    margin-left: auto;
    margin-right: 6px;
}
.menu {
    width: 23px;
    margin-left: 12px;
    display: flex;
    flex-direction: column;
    gap: 3px;
}
.menu i {
    height: 5px;
    border-radius: 2px;
    background: #666;
}

/* page */
.viewport {
    flex: 1;
    min-height: 0;
    display: flex;
    background: #fff;
}
.page {
    flex: 1;
    min-width: 0;
    overflow: hidden;
}
.product-form {
    padding: 27px 0 0 27px;
}
.row {
    display: flex;
    align-items: center;
    margin-bottom: 30px;
}
.row .lbl {
    margin-bottom: 6px;
}
.row.bottom {
    align-items: flex-end;
    margin-bottom: 0;
}
.row.bottom .lbl {
    margin-bottom: -5px;
}
.lbl {
    width: 72px;
    flex: none;
    font-family: "Noto Sans CJK SC", sans-serif;
    font-size: 24px;
    line-height: 32px;
    color: #111;
    white-space: nowrap;
}
.lbl.block {
    display: block;
    width: auto;
}
.lbl.detail {
    margin-top: 36px;
}
.colon {
    font-family: "Noto Sans CJK TC", sans-serif;
}
.txt {
    height: 45px;
    background: #fff;
    border: 1px solid #a0a0a0;
    border-top-width: 2px;
    border-bottom: 3px solid #999;
    padding: 0 4px;
}
.txt.long {
    width: 900px;
}
.txt.short {
    width: 300px;
}
.filebox {
    width: 900px;
    height: 48px;
    margin-bottom: 60px;
    padding: 6px 0 0 16px;
    display: flex;
    align-items: flex-start;
    border: 1px solid #a0a0a0;
    border-top-width: 2px;
    border-bottom: 3px solid #999;
}
.file-btn {
    width: 96px;
    height: 31px;
    text-align: center;
    font-family: "Noto Sans CJK SC", sans-serif;
    font-size: 18px;
    line-height: 26px;
    color: #777;
    background: linear-gradient(#f4f4f4, #dcdcdc);
    border: 1px solid #a8a8a8;
    border-radius: 2px;
}
.file-name {
    margin-left: 7px;
    font-family: "Noto Sans CJK SC", sans-serif;
    font-size: 18px;
    line-height: 28px;
    color: #888;
}
.area-wrap {
    position: relative;
    width: 935px;
    height: 135px;
}
.area {
    display: block;
    width: 100%;
    height: 100%;
    resize: none;
    background: #fff;
    border: 1px solid #a0a0a0;
    border-top-width: 2px;
    border-bottom: 3px solid #999;
}
.grip {
    position: absolute;
    right: 5px;
    bottom: 4px;
    width: 22px;
    height: 22px;
}

/* rich text editor */
.editor {
    width: 1499px;
    margin-left: 1px;
}
.toolbar {
    height: 122px;
    padding: 3px 0 6px 5px;
    background: linear-gradient(#fff, #f2f2f2);
    border: 1px solid #d2d2d2;
    border-bottom-color: #cfcfcf;
    border-radius: 5px 5px 0 0;
    box-shadow: 0 3px 6px rgba(0, 0, 0, 0.1);
    position: relative;
}
.tb-row {
    height: 37px;
    display: flex;
    align-items: center;
}
.tb-row.second {
    padding-left: 2px;
}
.tb-row.second .ic {
    width: 36.4px;
}
.tb-row.third {
    padding-left: 1px;
}
.ic {
    width: 36px;
    height: 37px;
    flex: none;
    display: flex;
    align-items: center;
    justify-content: center;
}
.ic svg {
    width: 28px;
    height: 28px;
    flex: none;
    display: block;
    filter: blur(0.3px);
}
.tb-row.second .ic.w40 {
    width: 40px;
}
.ic.dd {
    width: 51px;
    justify-content: flex-start;
    padding-left: 4px;
}
.ic.dd .gl {
    width: 28px;
    text-align: center;
}
.ic.dd .caret {
    margin-left: 4px;
}
.caret {
    display: block;
    width: 0;
    height: 0;
    border-style: solid;
    border-width: 5px 4px 0;
    border-color: #222 transparent transparent;
}
.sep {
    width: 1px;
    height: 27px;
    flex: none;
    margin: 0 8px 0 5px;
    background: #d9d9d9;
    box-shadow: 1px 0 0 #fff;
}
.sep.tight {
    margin: 0 2px;
}
.sep.mid {
    margin: 0 7px 0 4px;
}
.sep.after-sel {
    margin: 0 7px 0 8px;
}
.sep.last-sep {
    margin-right: 6px;
}
.html-ico {
    font: bold 10px "Liberation Sans", sans-serif;
    letter-spacing: 0.3px;
    color: #3d78b8;
    transform: scaleY(1.1);
}
.gl {
    font-family: "Liberation Serif", serif;
    font-size: 22px;
    line-height: 1;
    color: #333;
    font-style: normal;
    font-weight: normal;
}
b.gl {
    font-weight: bold;
}
.gl.it {
    font-style: italic;
    color: #444;
}
.gl.ul {
    text-decoration: underline;
}
.gl.boxed {
    width: 22px;
    height: 22px;
    text-align: center;
    line-height: 20px;
    font-size: 20px;
    border: 2px solid #777;
}
.gl.strike {
    font-size: 13px;
    text-decoration: line-through;
}
.gl.sc {
    font: bold 20px "Liberation Sans", sans-serif;
}
.gl.sc sup,
.gl.sc sub {
    font-size: 10px;
    color: #3f80d8;
    line-height: 0;
}
.gl.big {
    font-size: 26px;
}
.gl.omega {
    font-family: "Liberation Sans", sans-serif;
    font-size: 26px;
    color: #3f80e0;
}
.svg-ab {
    font: bold 13px "Liberation Sans", sans-serif;
    fill: #333;
}
.svg-num {
    font: bold 9px "Liberation Sans", sans-serif;
    fill: #4f8fe0;
}
.svg-a {
    font: bold 15px "Liberation Sans", sans-serif;
    fill: #444;
}
.svg-big {
    font: 20px "Liberation Serif", serif;
    fill: #333;
}
.svg-small {
    font: bold 11px "Liberation Serif", serif;
    fill: #333;
}
.svg-help {
    font: bold 18px "Liberation Sans", sans-serif;
    fill: #fff;
}
.sel {
    width: 111px;
    height: 34px;
    flex: none;
    margin-right: 4px;
    display: flex;
    background: #fff;
    border: 1px solid #cfcfcf;
    border-radius: 4px;
    font-family: "Noto Sans CJK SC", sans-serif;
    font-size: 18px;
    line-height: 32px;
    color: #333;
}
.sel-text {
    flex: 1;
    min-width: 0;
    margin: 0 3px 0 8px;
    white-space: nowrap;
    overflow: hidden;
}
.sel-btn {
    width: 14px;
    flex: none;
    margin: 0 0 2px;
    display: flex;
    align-items: center;
    justify-content: center;
    border-left: 1px solid #d4d4d4;
}
.first-sel {
    margin-right: 0;
}
.code-sel {
    margin: 0 0 0 -3px;
}
.ic.after-code {
    margin-left: 2px;
}
.ic.monitor {
    margin-left: 55px;
}
.edit-body {
    height: 700px;
    background: #fff;
    border-left: 1px solid #d2d2d2;
    border-right: 1px solid #d2d2d2;
}

/* scrollbar */
.scrollbar {
    width: 25px;
    flex: none;
    display: flex;
    flex-direction: column;
    background: #f0f0f0;
}
.sb-btn {
    height: 25px;
    flex: none;
    display: flex;
    align-items: center;
    justify-content: center;
}
.arrow-up,
.arrow-down {
    width: 0;
    height: 0;
    border-style: solid;
    border-color: transparent;
}
.arrow-up {
    border-width: 0 5px 5px;
    border-bottom-color: #a3a3a3;
}
.arrow-down {
    border-width: 5px 5px 0;
    border-top-color: #505050;
}
.sb-thumb {
    height: 920px;
    margin: 0 3px;
    background: #b8b8b8;
    border: 1px solid #a8a8a8;
}
.sb-track {
    flex: 1;
}
```
